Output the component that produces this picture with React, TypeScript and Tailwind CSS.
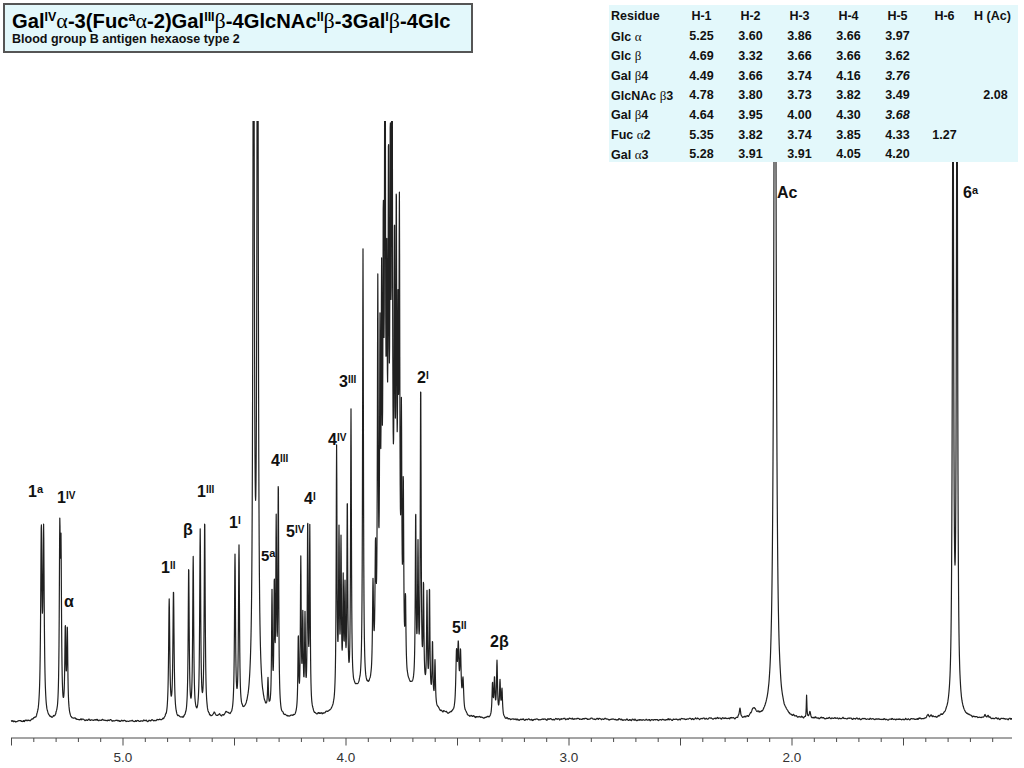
import React from "react";

type Pk = [number, number, number];

const peaks: Pk[] = [
  // 1a
  [41.3, 180, 0.75], [43.6, 180, 0.75],
  // 1IV
  [59.8, 170, 0.6], [61.0, 150, 0.6],
  // alpha
  [65.3, 85, 0.6], [67.3, 85, 0.6],
  // 1II
  [169.2, 118, 0.7], [173.5, 126, 0.7],
  // beta
  [188.7, 150, 0.6], [193.2, 158, 0.6],
  // 1III
  [200.2, 185, 0.6], [204.7, 196, 0.6],
  [214, 4, 1.5], [219, 3, 1.5], [226, 5, 2],
  // 1I
  [235, 158, 0.6], [239, 166, 0.6],
  // HDO
  [253.6, 900, 0.7], [257.6, 900, 0.7], [255.6, 22, 5],
  // 5a / 4III
  [268, 30, 0.5], [272, 115, 0.5], [274.3, 120, 0.5], [276.2, 180, 0.5], [278.3, 225, 0.5],
  // 5IV / 4I
  [298.3, 75, 0.5], [300.8, 150, 0.5], [302.8, 90, 0.5], [305, 90, 0.5], [307.7, 185, 0.5], [309.8, 180, 0.5],
  // 4IV
  [336.6, 255, 0.5], [339, 160, 0.5], [341, 150, 0.5], [343.2, 110, 0.5], [345, 100, 0.5], [347.3, 190, 0.5], [351, 280, 0.5],
  // 3III
  [363, 440, 0.5], [373, 90, 0.6], [375.5, 110, 0.6],
  // main cluster
  [377.8, 360, 0.5], [380, 280, 0.5], [381.6, 310, 0.5], [383.3, 340, 0.5], [385, 700, 0.5], [386.8, 260, 0.5],
  [388.5, 380, 0.5], [390.3, 380, 0.5], [392, 650, 0.5], [394.5, 330, 0.5], [396.3, 380, 0.5], [398, 260, 0.5],
  [399.4, 400, 0.5], [401.4, 220, 0.5], [403.3, 170, 0.5], [405.5, 70, 0.5],
  [390, 120, 9], [356, 20, 12], [420, 18, 10],
  // 2I group
  [415.7, 170, 0.5], [418, 130, 0.5], [420.7, 300, 0.5], [423.5, 100, 0.5], [427, 100, 0.5], [429.5, 110, 0.5],
  [432.5, 60, 0.5], [435, 45, 0.5],
  // 5II
  [456.5, 55, 0.8], [458.3, 58, 0.8], [460.5, 55, 0.8], [463, 32, 0.8],
  // 2beta
  [492.5, 32, 0.6], [494.5, 36, 0.6], [497, 55, 0.6], [500, 35, 0.6], [502, 27, 0.6],
  // small
  [740, 10, 0.8], [754, 9, 3], [806.6, 22, 0.35], [810, 6, 0.8],
  // Ac
  [775, 920, 1.25],
  // 6a
  [953, 700, 0.7], [957, 700, 0.7],
  [928, 3, 1], [931, 3, 1], [985, 3, 1], [988, 2, 1],
];

function hash(n: number): number {
  const s = Math.sin(n * 127.1 + 311.7) * 43758.5453;
  return s - Math.floor(s);
}

function buildPath(): string {
  const pts: string[] = [];
  for (let i = 0; ; i++) {
    const x = 11 + i * 0.2;
    if (x > 1012) break;
    let h = 0;
    for (const [c, a, w] of peaks) {
      const d = x - c;
      h += (a * w * w) / (d * d + w * w);
    }
    const noise =
      0.35 * Math.sin(x * 0.9) +
      0.25 * Math.sin(x * 2.3 + 1.3) +
      0.6 * Math.sin(x * 0.05 + 0.7) +
      (hash(Math.floor(x * 1.5)) - 0.5) * 0.9;
    const base = 721.3 - (x - 11) * 0.0024 + noise;
    const y = base - h;
    pts.push(`${x.toFixed(2)},${y.toFixed(2)}`);
  }
  return "M" + pts.join("L");
}

const specPath = buildPath();

const ppmX = (p: number) => 123 + (5 - p) * 223;

const ticks: { x: number; major: boolean }[] = [];
for (let k = 55; k >= 11; k--) {
  ticks.push({ x: ppmX(k / 10), major: k % 5 === 0 });
}

type Lbl = { x: number; y: number; t: string; s?: string; size?: number; ss?: number };
const labels: Lbl[] = [
  { x: 28, y: 497, t: "1", s: "a", ss: 11 },
  { x: 57, y: 503, t: "1", s: "IV" },
  { x: 64, y: 607, t: "α" },
  { x: 161, y: 573, t: "1", s: "II" },
  { x: 183, y: 535, t: "β" },
  { x: 197, y: 497, t: "1", s: "III" },
  { x: 229, y: 528, t: "1", s: "I" },
  { x: 261, y: 561, t: "5", s: "a", size: 15, ss: 11 },
  { x: 271, y: 466, t: "4", s: "III" },
  { x: 286, y: 537, t: "5", s: "IV" },
  { x: 304, y: 504, t: "4", s: "I" },
  { x: 328, y: 445, t: "4", s: "IV" },
  { x: 339, y: 387, t: "3", s: "III" },
  { x: 417, y: 383, t: "2", s: "I" },
  { x: 452, y: 633, t: "5", s: "II" },
  { x: 490, y: 647, t: "2β" },
  { x: 777, y: 198, t: "Ac" },
  { x: 963, y: 198, t: "6", s: "a", ss: 11 },
];

const rows: [string, string, string, string[]][] = [
  ["Glc ", "α", "", ["5.25", "3.60", "3.86", "3.66", "3.97", "", ""]],
  ["Glc ", "β", "", ["4.69", "3.32", "3.66", "3.66", "3.62", "", ""]],
  ["Gal ", "β", "4", ["4.49", "3.66", "3.74", "4.16", "*3.76", "", ""]],
  ["GlcNAc ", "β", "3", ["4.78", "3.80", "3.73", "3.82", "3.49", "", "2.08"]],
  ["Gal ", "β", "4", ["4.64", "3.95", "4.00", "4.30", "*3.68", "", ""]],
  ["Fuc ", "α", "2", ["5.35", "3.82", "3.74", "3.85", "4.33", "1.27", ""]],
  ["Gal ", "α", "3", ["5.28", "3.91", "3.91", "4.05", "4.20", "", ""]],
];

const headers = ["H-1", "H-2", "H-3", "H-4", "H-5", "H-6", "H (Ac)"];

const sans = "font-['Liberation_Sans',Arial,sans-serif]";

function Gk({ c }: { c: string }) {
  return <span className="font-normal font-['Liberation_Serif','Times_New_Roman',serif] text-[13px]">{c}</span>;
}

function Sup({ c }: { c: string }) {
  return <span className="relative top-[-7px] text-[12.5px] leading-none">{c}</span>;
}

function TGk({ c }: { c: string }) {
  return <span className="font-normal font-['Liberation_Serif',serif] text-[22px]">{c}</span>;
}

export default function App() {
  return (
    <div className={`relative w-[1024px] h-[768px] bg-white overflow-hidden ${sans}`}>
      <svg className="absolute inset-0" width="1024" height="768" viewBox="0 0 1024 768">
        <defs>
          <clipPath id="plotclip">
            <rect x="0" y="121" width="1024" height="647" />
          </clipPath>
        </defs>
        <path d={specPath} fill="none" stroke="#202020" strokeWidth="1.2" strokeLinejoin="round" clipPath="url(#plotclip)" />
        <line x1="11" y1="738" x2="1012" y2="738" stroke="#4a4a4a" strokeWidth="1" />
        {ticks.map((t, i) => (
          <line key={i} x1={t.x} y1="738" x2={t.x} y2={t.major ? 745.5 : 742} stroke="#4a4a4a" strokeWidth="1" />
        ))}
        {[5, 4, 3, 2].map((p) => (
          <text key={p} x={ppmX(p)} y="762" textAnchor="middle" fontSize="13.5" fill="#333" fontFamily="'Liberation Sans', Arial, sans-serif">
            {p.toFixed(1)}
          </text>
        ))}
        {labels.map((l, i) => (
          <text key={i} x={l.x} y={l.y} fontSize={l.size ?? 16} fontWeight="bold" fill="#111" fontFamily="'Liberation Sans', Arial, sans-serif">
            {l.t}
            {l.s && (
              <tspan dy="-4.5" fontSize={l.ss ?? 10}>
                {l.s}
              </tspan>
            )}
          </text>
        ))}
      </svg>

      <div className="absolute left-[3px] top-[3px] w-[470px] h-[50px] border-2 border-[#555] bg-[#e3f8fb] pl-[7px] pt-[5px]">
        <div className="text-[20.2px] font-bold leading-[21px] text-black whitespace-nowrap">
          Gal<Sup c="IV" />
          <TGk c="α" />-3(Fuc<Sup c="a" />
          <TGk c="α" />-2)Gal<Sup c="III" />
          <TGk c="β" />-4GlcNAc<Sup c="II" />
          <TGk c="β" />-3Gal<Sup c="I" />
          <TGk c="β" />-4Glc
        </div>
        <div className="text-[12.5px] font-bold leading-[15px] text-[#111] whitespace-nowrap">Blood group B antigen hexaose type 2</div>
      </div>

      <div className="absolute left-[609px] top-[5px] w-[409px] h-[157px] bg-[#e3f8fb] pt-[2px] overflow-hidden text-[12.5px] font-bold text-[#111]">
        <div className="grid grid-cols-[68px_49px_49px_49px_49px_49px_45px_51px] h-[19.7px] items-center">
          <div className="pl-[2px]">Residue</div>
          {headers.map((h) => (
            <div key={h} className="text-center whitespace-nowrap">
              {h}
            </div>
          ))}
        </div>
        {rows.map(([name, g, n, vals], i) => (
          <div key={i} className="grid grid-cols-[68px_49px_49px_49px_49px_49px_45px_51px] h-[19.7px] items-center">
            <div className="pl-[2px] whitespace-nowrap">
              {name}
              <Gk c={g} />
              {n}
            </div>
            {vals.map((v, j) => (
              <div key={j} className={`text-center ${v.startsWith("*") ? "italic" : ""} ${j === 6 ? "pl-[6px]" : ""}`}>
                {v.replace("*", "")}
              </div>
            ))}
          </div>
        ))}
      </div>
    </div>
  );
}
